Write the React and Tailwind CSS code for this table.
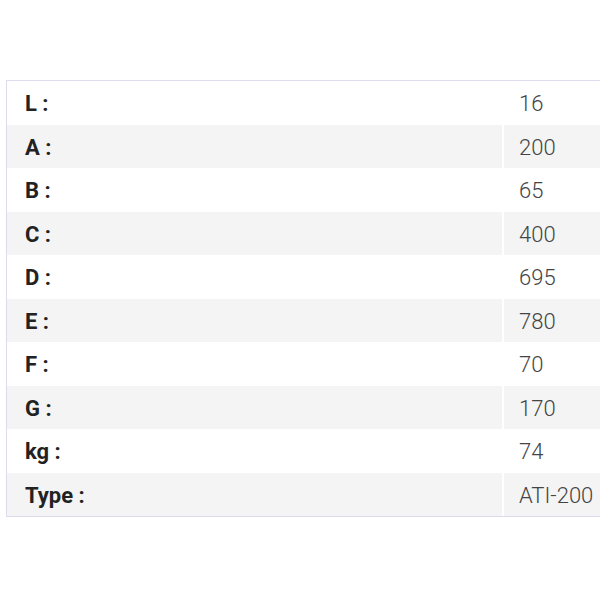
const rows = [
  ["L :", "16"],
  ["A :", "200"],
  ["B :", "65"],
  ["C :", "400"],
  ["D :", "695"],
  ["E :", "780"],
  ["F :", "70"],
  ["G :", "170"],
  ["kg :", "74"],
  ["Type :", "ATI-200"],
];

const App = () => {
  return (
    <main className="w-[600px] h-[600px] bg-white overflow-hidden pt-[80px] pl-[6px] font-['Roboto',sans-serif]">
      <div className="w-[640px] border border-[#dcdcee]">
        {rows.map(([label, value], index) => (
          <div
            key={index}
            className={`flex h-[43.5px] items-center ${index % 2 === 1 ? "bg-[#f4f4f4]" : "bg-white"}`}
          >
            <div className="w-[495px] h-full flex items-center pt-[2px] pl-[18px] text-[22px] font-bold text-[#222]">
              {label}
            </div>
            <div className="w-[2px] h-full bg-white" />
            <div className="flex-1 h-full flex items-center pt-[2px] pl-[15px] text-[22px] font-light text-[#444]">
              {value}
            </div>
          </div>
        ))}
      </div>
    </main>
  );
};

export default App;
